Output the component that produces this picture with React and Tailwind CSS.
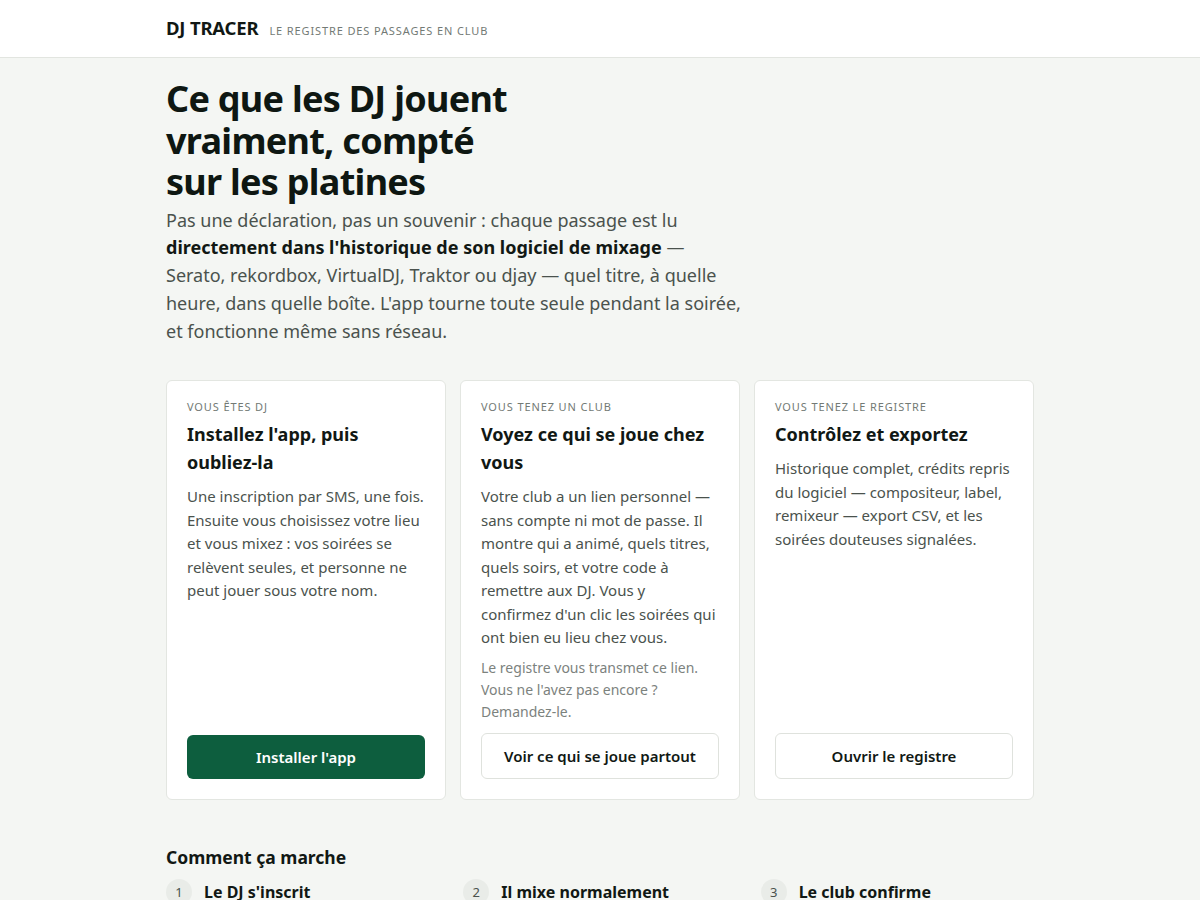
export default function App() {
  const cards = [
    {
      label: "Vous êtes DJ",
      title: "Installez l'app, puis oubliez-la",
      body: "Une inscription par SMS, une fois. Ensuite vous choisissez votre lieu et vous mixez : vos soirées se relèvent seules, et personne ne peut jouer sous votre nom.",
      button: "Installer l'app",
      primary: true,
    },
    {
      label: "Vous tenez un club",
      title: "Voyez ce qui se joue chez vous",
      body: "Votre club a un lien personnel — sans compte ni mot de passe. Il montre qui a animé, quels titres, quels soirs, et votre code à remettre aux DJ. Vous y confirmez d'un clic les soirées qui ont bien eu lieu chez vous.",
      note: "Le registre vous transmet ce lien. Vous ne l'avez pas encore ? Demandez-le.",
      button: "Voir ce qui se joue partout",
    },
    {
      label: "Vous tenez le registre",
      title: "Contrôlez et exportez",
      body: "Historique complet, crédits repris du logiciel — compositeur, label, remixeur — export CSV, et les soirées douteuses signalées.",
      button: "Ouvrir le registre",
    },
  ];
  const steps = ["Le DJ s'inscrit", "Il mixe normalement", "Le club confirme"];
  return (
    <div className="min-h-screen bg-[#f4f6f3] text-[#111814]" style={{ fontFamily: '"Noto Sans", "DejaVu Sans", sans-serif' }}>
      <header className="bg-white border-b border-[#e2e5e0] h-[58px]">
        <div className="max-w-[900px] mx-auto px-4 h-full flex items-baseline pt-[14px] gap-[11px]">
          <span className="text-[18.5px] font-bold tracking-[-0.01em]">DJ TRACER</span>
          <span className="text-[11px] uppercase tracking-[0.08em] text-[#737a75]">Le registre des passages en club</span>
        </div>
      </header>
      <main className="max-w-[900px] mx-auto px-4 pt-[20px]">
        <h1 className="text-[36px] font-bold leading-[41.5px] tracking-[-0.02em] max-w-[360px] text-[#0e1712]">
          Ce que les DJ jouent vraiment, compté sur les platines
        </h1>
        <p className="mt-[4px] text-[18px] leading-[27.8px] text-[#4a524d] max-w-[580px]">
          Pas une déclaration, pas un souvenir : chaque passage est lu{" "}
          <strong className="font-bold text-[#111814]">directement dans l'historique de son logiciel de mixage</strong>{" "}
          — Serato, rekordbox, VirtualDJ, Traktor ou djay — quel titre, à quelle heure, dans quelle boîte. L'app tourne toute seule pendant la soirée, et fonctionne même sans réseau.
        </p>
        <div className="mt-[35px] grid grid-cols-3 gap-[14px]">
          {cards.map((c) => (
            <div key={c.label} className="bg-white border border-[#e3e6e1] rounded-md pt-[19px] px-5 pb-5 flex flex-col h-[420px]">
              <div className="text-[11px] leading-[14px] uppercase tracking-[0.08em] text-[#737a75]">{c.label}</div>
              <h2 className="mt-[6px] text-[18px] leading-[28px] font-bold text-[#111814]">{c.title}</h2>
              <p className="mt-[9px] text-[15px] leading-[23.4px] text-[#4a524d]">{c.body}</p>
              {c.note && (
                <p className="mt-2 text-[14px] leading-[21.6px] text-[#7c827e]">{c.note}</p>
              )}
              <div className="mt-auto">
                {c.primary ? (
                  <button className="w-full h-[44px] rounded-md bg-[#0d5e3e] text-white text-[15px] font-semibold">
                    {c.button}
                  </button>
                ) : (
                  <button className="w-full h-[46px] rounded-md bg-white border border-[#dfe2dd] text-[#111814] text-[15px] font-semibold">
                    {c.button}
                  </button>
                )}
              </div>
            </div>
          ))}
        </div>
        <h3 className="mt-[44px] text-[17.5px] leading-[26px] font-bold">Comment ça marche</h3>
        <div className="mt-[9px] grid grid-cols-3 gap-6">
          {steps.map((s, i) => (
            <div key={s} className="flex items-center gap-3">
              <span className="w-[26px] h-[26px] rounded-full bg-[#e9ece8] flex items-center justify-center text-[13px] text-[#4a524d]">{i + 1}</span>
              <span className="text-[16px] font-bold">{s}</span>
            </div>
          ))}
        </div>
        <div className="h-20" />
      </main>
    </div>
  );
}
